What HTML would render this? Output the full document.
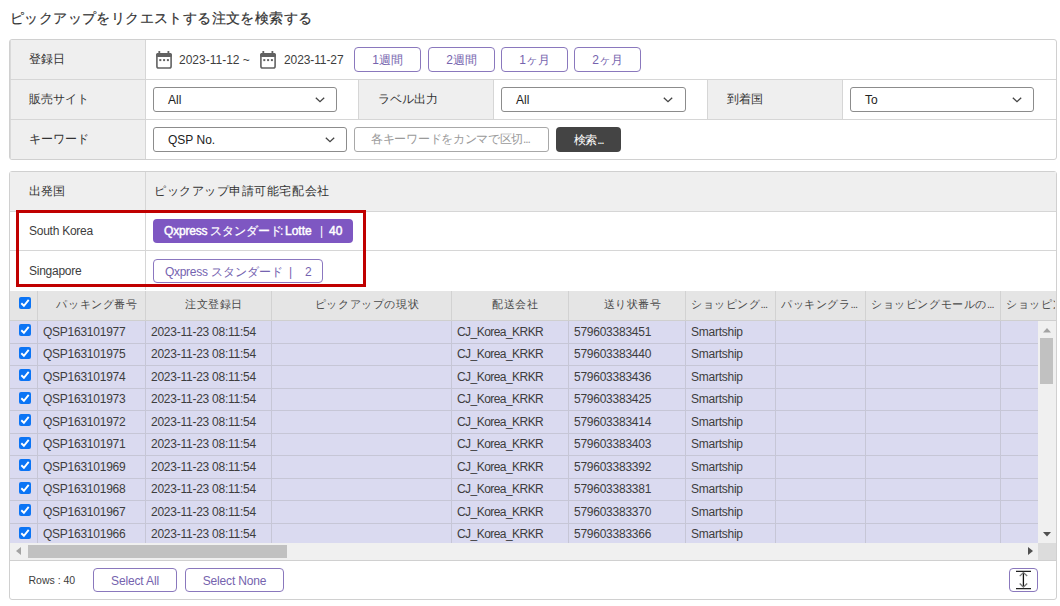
<!DOCTYPE html>
<html lang="ja">
<head>
<meta charset="utf-8">
<style>
*{box-sizing:border-box;margin:0;padding:0}
html,body{width:1060px;height:606px;overflow:hidden;background:#fff}
body{font-family:"Liberation Sans",sans-serif;font-size:12px;color:#333;position:relative}
.a{position:absolute}
.title{left:10px;top:10px;font-size:14px;font-weight:normal;-webkit-text-stroke:0.2px #333;color:#333;letter-spacing:0.4px;white-space:nowrap}
.box1{left:9px;top:39px;width:1048px;height:121px;border:1px solid #d0d0d0;border-radius:3px;overflow:hidden}
.lab{background:#efefef;color:#333;white-space:nowrap}
.hl{height:1px;background:#d6d6d6}
.vl{width:1px;background:#d6d6d6}
.cal{width:16px;height:17px}
.wbtn{height:25px;width:67px;border:1px solid #8a78bd;border-radius:4px;color:#7563ae;text-align:center;line-height:25px;font-size:12px;background:#fff}
.sel{height:25px;border:1px solid #8c8c8c;border-radius:3px;background:#fff;color:#222;line-height:24px;padding-left:14px;font-size:12px}
.chev{position:absolute;top:8.6px;width:10px;height:6px;margin-left:-0.6px}
.box2{left:9px;top:171px;width:1048px;height:429px;border:1px solid #d0d0d0;border-radius:3px;overflow:hidden}
.chip1{left:153px;top:219px;width:200px;height:24px;background:#7e57c2;border-radius:4px;color:#fff;line-height:25px;white-space:nowrap}
.chip2{left:153px;top:259px;width:170px;height:24px;border:1px solid #8b77c0;border-radius:4px;color:#7563b0;line-height:24px;white-space:nowrap}
.red{left:16px;top:210px;width:350px;height:77px;border:3px solid #c00000}
.gh{background:#e5e5e5}
.ght{color:#4a4a4a;font-size:11px;letter-spacing:0.6px;white-space:nowrap;overflow:hidden;text-overflow:ellipsis}
.row{background:#dadaf0}
.cell{letter-spacing:-0.25px}
.cell{white-space:nowrap;color:#3d3d3d}
.cb{width:12px;height:12px;background:#0b74f5;border-radius:2px}
.cb svg{display:block}
.fbtn{height:24px;border:1px solid #8a78bd;border-radius:4px;color:#7563ae;text-align:center;line-height:25px;letter-spacing:-0.15px;font-size:12px;background:#fff}
</style>
</head>
<body>
<div class="a title">ピックアップをリクエストする注文を検索する</div>

<!-- filter box -->
<div class="a box1"></div>
<div class="a lab" style="left:10px;top:40px;width:135px;height:119px"></div>
<div class="a lab" style="left:358px;top:80px;width:135px;height:39px"></div>
<div class="a lab" style="left:707px;top:80px;width:135px;height:39px"></div>
<div class="a vl" style="left:10px;top:40px;height:119px;background:#dadada"></div>
<div class="a hl" style="left:10px;top:79px;width:1046px"></div>
<div class="a hl" style="left:10px;top:119px;width:1046px"></div>
<div class="a vl" style="left:145px;top:40px;height:119px"></div>
<div class="a vl" style="left:358px;top:80px;height:39px"></div>
<div class="a vl" style="left:493px;top:80px;height:39px"></div>
<div class="a vl" style="left:707px;top:80px;height:39px"></div>
<div class="a vl" style="left:842px;top:80px;height:39px"></div>

<div class="a lab" style="left:29px;top:51px;background:none">登録日</div>
<div class="a lab" style="left:29px;top:90.5px;background:none">販売サイト</div>
<div class="a lab" style="left:29px;top:130.5px;background:none">キーワード</div>
<div class="a lab" style="left:378px;top:90.5px;background:none">ラベル出力</div>
<div class="a lab" style="left:727px;top:90.5px;background:none">到着国</div>

<svg class="a" style="left:152px;top:48px" width="24" height="24" viewBox="0 0 24 24"><rect x="4.9" y="5.8" width="14.2" height="14.2" rx="1.8" stroke="#626262" stroke-width="1.6" fill="none"/><rect x="4.1" y="5" width="15.8" height="4" rx="1.5" fill="#626262"/><rect x="6.4" y="3" width="1.8" height="3" fill="#626262"/><rect x="15.5" y="3" width="1.8" height="3" fill="#626262"/><rect x="7.3" y="11.1" width="2" height="2" fill="#626262"/><rect x="11.1" y="11.1" width="2" height="2" fill="#626262"/><rect x="14.9" y="11.1" width="2" height="2" fill="#626262"/></svg>
<div class="a cell" style="left:179px;top:53px;letter-spacing:0">2023-11-12 ~</div>
<svg class="a" style="left:256px;top:48px" width="24" height="24" viewBox="0 0 24 24"><rect x="4.9" y="5.8" width="14.2" height="14.2" rx="1.8" stroke="#626262" stroke-width="1.6" fill="none"/><rect x="4.1" y="5" width="15.8" height="4" rx="1.5" fill="#626262"/><rect x="6.4" y="3" width="1.8" height="3" fill="#626262"/><rect x="15.5" y="3" width="1.8" height="3" fill="#626262"/><rect x="7.3" y="11.1" width="2" height="2" fill="#626262"/><rect x="11.1" y="11.1" width="2" height="2" fill="#626262"/><rect x="14.9" y="11.1" width="2" height="2" fill="#626262"/></svg>
<div class="a cell" style="left:284px;top:53px;letter-spacing:-0.1px">2023-11-27</div>
<div class="a wbtn" style="left:354px;top:47px">1週間</div>
<div class="a wbtn" style="left:428px;top:47px">2週間</div>
<div class="a wbtn" style="left:501px;top:47px">1ヶ月</div>
<div class="a wbtn" style="left:574px;top:47px">2ヶ月</div>

<div class="a sel" style="left:153px;top:87px;width:184px">All<svg class="chev" style="left:162px" viewBox="0 0 10 6"><path d="M0.8 0.8L5 4.7L9.2 0.8" stroke="#444" stroke-width="1.3" fill="none"/></svg></div>
<div class="a sel" style="left:501px;top:87px;width:185px">All<svg class="chev" style="left:162px" viewBox="0 0 10 6"><path d="M0.8 0.8L5 4.7L9.2 0.8" stroke="#444" stroke-width="1.3" fill="none"/></svg></div>
<div class="a sel" style="left:850px;top:87px;width:184px">To<svg class="chev" style="left:162px" viewBox="0 0 10 6"><path d="M0.8 0.8L5 4.7L9.2 0.8" stroke="#444" stroke-width="1.3" fill="none"/></svg></div>
<div class="a sel" style="left:153px;top:127px;width:194px">QSP No.<svg class="chev" style="left:172px" viewBox="0 0 10 6"><path d="M0.8 0.8L5 4.7L9.2 0.8" stroke="#444" stroke-width="1.3" fill="none"/></svg></div>
<div class="a sel" style="left:354px;top:127px;width:195px;border-color:#a8a8a8;color:#9a9a9a;padding-left:16px;line-height:22.5px;letter-spacing:-0.3px">各キーワードをカンマで区切<span style="letter-spacing:-1.2px">...</span></div>
<div class="a" style="left:556px;top:127px;width:65px;height:25px;background:#444;border-radius:4px;color:#fff;text-align:center;line-height:26px;letter-spacing:-0.3px">検索<span style="letter-spacing:-1.3px">...</span></div>

<!-- box 2 -->
<div class="a box2"></div>
<div class="a lab" style="left:10px;top:172px;width:1046px;height:39px"></div>
<div class="a hl" style="left:10px;top:211px;width:1046px"></div>
<div class="a hl" style="left:10px;top:250px;width:1046px"></div>
<div class="a vl" style="left:145px;top:172px;height:118px"></div>
<div class="a lab" style="left:29px;top:183px;background:none">出発国</div>
<div class="a lab" style="left:154px;top:183px;background:none;letter-spacing:0.55px">ピックアップ申請可能宅配会社</div>
<div class="a cell" style="left:29px;top:224px">South Korea</div>
<div class="a cell" style="left:29px;top:264px">Singapore</div>
<div class="a chip1"><span style="position:absolute;left:11px;-webkit-text-stroke:0.45px #fff;letter-spacing:-0.2px">Qxpress</span><span style="position:absolute;left:57px;-webkit-text-stroke:0.2px #fff;font-size:11.5px">スタンダード</span><span style="position:absolute;left:127px;-webkit-text-stroke:0.2px #fff">:</span><span style="position:absolute;left:132px;-webkit-text-stroke:0.45px #fff">Lotte</span><span style="position:absolute;left:167px">|</span><span style="position:absolute;left:176px;-webkit-text-stroke:0.45px #fff">40</span></div>
<div class="a chip2"><span style="position:absolute;left:11px;letter-spacing:-0.3px">Qxpress</span><span style="position:absolute;left:57px">スタンダード</span><span style="position:absolute;left:135px">|</span><span style="position:absolute;left:151px">2</span></div>
<div class="a red"></div>

<!-- grid -->
<div id="grid"><div class="a gh" style="left:10px;top:291px;width:1046px;height:29px"></div>
<div class="a hl" style="left:10px;top:320px;width:1046px;background:#cfcfcf"></div>
<div class="a row" style="left:10px;top:321px;width:1028px;height:222px"></div>
<div class="a hl" style="left:10px;top:342.5px;width:1028px;background:#c6c6d6"></div>
<div class="a hl" style="left:10px;top:365.0px;width:1028px;background:#c6c6d6"></div>
<div class="a hl" style="left:10px;top:387.5px;width:1028px;background:#c6c6d6"></div>
<div class="a hl" style="left:10px;top:410.0px;width:1028px;background:#c6c6d6"></div>
<div class="a hl" style="left:10px;top:432.5px;width:1028px;background:#c6c6d6"></div>
<div class="a hl" style="left:10px;top:455.0px;width:1028px;background:#c6c6d6"></div>
<div class="a hl" style="left:10px;top:477.5px;width:1028px;background:#c6c6d6"></div>
<div class="a hl" style="left:10px;top:500.0px;width:1028px;background:#c6c6d6"></div>
<div class="a hl" style="left:10px;top:522.5px;width:1028px;background:#c6c6d6"></div>
<div class="a vl" style="left:37px;top:291px;height:29px;background:#d2d2d2"></div>
<div class="a vl" style="left:37px;top:321px;height:222px;background:#c6c6d6"></div>
<div class="a vl" style="left:145px;top:291px;height:29px;background:#d2d2d2"></div>
<div class="a vl" style="left:145px;top:321px;height:222px;background:#c6c6d6"></div>
<div class="a vl" style="left:271px;top:291px;height:29px;background:#d2d2d2"></div>
<div class="a vl" style="left:271px;top:321px;height:222px;background:#c6c6d6"></div>
<div class="a vl" style="left:451px;top:291px;height:29px;background:#d2d2d2"></div>
<div class="a vl" style="left:451px;top:321px;height:222px;background:#c6c6d6"></div>
<div class="a vl" style="left:568px;top:291px;height:29px;background:#d2d2d2"></div>
<div class="a vl" style="left:568px;top:321px;height:222px;background:#c6c6d6"></div>
<div class="a vl" style="left:685px;top:291px;height:29px;background:#d2d2d2"></div>
<div class="a vl" style="left:685px;top:321px;height:222px;background:#c6c6d6"></div>
<div class="a vl" style="left:775px;top:291px;height:29px;background:#d2d2d2"></div>
<div class="a vl" style="left:775px;top:321px;height:222px;background:#c6c6d6"></div>
<div class="a vl" style="left:865px;top:291px;height:29px;background:#d2d2d2"></div>
<div class="a vl" style="left:865px;top:321px;height:222px;background:#c6c6d6"></div>
<div class="a vl" style="left:1000px;top:291px;height:29px;background:#d2d2d2"></div>
<div class="a vl" style="left:1000px;top:321px;height:222px;background:#c6c6d6"></div>
<div class="a cb" style="left:19px;top:297px"><svg width="12" height="12" viewBox="0 0 12 12"><path d="M2.3 6.3L4.9 8.8L9.7 2.9" stroke="#fff" stroke-width="1.9" fill="none"/></svg></div>
<div class="a ght" style="left:49px;top:296.5px;width:96px;text-align:center">パッキング番号</div>
<div class="a ght" style="left:157px;top:296.5px;width:114px;text-align:center">注文登録日</div>
<div class="a ght" style="left:283px;top:296.5px;width:168px;text-align:center">ピックアップの現状</div>
<div class="a ght" style="left:463px;top:296.5px;width:105px;text-align:center">配送会社</div>
<div class="a ght" style="left:580px;top:296.5px;width:105px;text-align:center">送り状番号</div>
<div class="a ght" style="left:691px;top:296.5px;width:94px;text-overflow:clip">ショッピング<span style='letter-spacing:-0.8px'>...</span></div>
<div class="a ght" style="left:781px;top:296.5px;width:94px;text-overflow:clip">パッキングラ<span style='letter-spacing:-0.8px'>...</span></div>
<div class="a ght" style="left:871px;top:296.5px;width:139px;text-overflow:clip">ショッピングモールの<span style='letter-spacing:-0.8px'>...</span></div>
<div class="a ght" style="left:1006px;top:296.5px;width:49px;text-overflow:clip">ショッピング</div>
<div class="a cb" style="left:19px;top:324px"><svg width="12" height="12" viewBox="0 0 12 12"><path d="M2.3 6.3L4.9 8.8L9.7 2.9" stroke="#fff" stroke-width="1.9" fill="none"/></svg></div>
<div class="a cell" style="left:43px;top:324.5px">QSP163101977</div>
<div class="a cell" style="left:151px;top:324.5px">2023-11-23 08:11:54</div>
<div class="a cell" style="left:457px;top:324.5px;letter-spacing:-0.55px">CJ_Korea_KRKR</div>
<div class="a cell" style="left:574px;top:324.5px">579603383451</div>
<div class="a cell" style="left:691px;top:324.5px">Smartship</div>
<div class="a cb" style="left:19px;top:347px"><svg width="12" height="12" viewBox="0 0 12 12"><path d="M2.3 6.3L4.9 8.8L9.7 2.9" stroke="#fff" stroke-width="1.9" fill="none"/></svg></div>
<div class="a cell" style="left:43px;top:347.0px">QSP163101975</div>
<div class="a cell" style="left:151px;top:347.0px">2023-11-23 08:11:54</div>
<div class="a cell" style="left:457px;top:347.0px;letter-spacing:-0.55px">CJ_Korea_KRKR</div>
<div class="a cell" style="left:574px;top:347.0px">579603383440</div>
<div class="a cell" style="left:691px;top:347.0px">Smartship</div>
<div class="a cb" style="left:19px;top:369px"><svg width="12" height="12" viewBox="0 0 12 12"><path d="M2.3 6.3L4.9 8.8L9.7 2.9" stroke="#fff" stroke-width="1.9" fill="none"/></svg></div>
<div class="a cell" style="left:43px;top:369.5px">QSP163101974</div>
<div class="a cell" style="left:151px;top:369.5px">2023-11-23 08:11:54</div>
<div class="a cell" style="left:457px;top:369.5px;letter-spacing:-0.55px">CJ_Korea_KRKR</div>
<div class="a cell" style="left:574px;top:369.5px">579603383436</div>
<div class="a cell" style="left:691px;top:369.5px">Smartship</div>
<div class="a cb" style="left:19px;top:392px"><svg width="12" height="12" viewBox="0 0 12 12"><path d="M2.3 6.3L4.9 8.8L9.7 2.9" stroke="#fff" stroke-width="1.9" fill="none"/></svg></div>
<div class="a cell" style="left:43px;top:392.0px">QSP163101973</div>
<div class="a cell" style="left:151px;top:392.0px">2023-11-23 08:11:54</div>
<div class="a cell" style="left:457px;top:392.0px;letter-spacing:-0.55px">CJ_Korea_KRKR</div>
<div class="a cell" style="left:574px;top:392.0px">579603383425</div>
<div class="a cell" style="left:691px;top:392.0px">Smartship</div>
<div class="a cb" style="left:19px;top:414px"><svg width="12" height="12" viewBox="0 0 12 12"><path d="M2.3 6.3L4.9 8.8L9.7 2.9" stroke="#fff" stroke-width="1.9" fill="none"/></svg></div>
<div class="a cell" style="left:43px;top:414.5px">QSP163101972</div>
<div class="a cell" style="left:151px;top:414.5px">2023-11-23 08:11:54</div>
<div class="a cell" style="left:457px;top:414.5px;letter-spacing:-0.55px">CJ_Korea_KRKR</div>
<div class="a cell" style="left:574px;top:414.5px">579603383414</div>
<div class="a cell" style="left:691px;top:414.5px">Smartship</div>
<div class="a cb" style="left:19px;top:437px"><svg width="12" height="12" viewBox="0 0 12 12"><path d="M2.3 6.3L4.9 8.8L9.7 2.9" stroke="#fff" stroke-width="1.9" fill="none"/></svg></div>
<div class="a cell" style="left:43px;top:437.0px">QSP163101971</div>
<div class="a cell" style="left:151px;top:437.0px">2023-11-23 08:11:54</div>
<div class="a cell" style="left:457px;top:437.0px;letter-spacing:-0.55px">CJ_Korea_KRKR</div>
<div class="a cell" style="left:574px;top:437.0px">579603383403</div>
<div class="a cell" style="left:691px;top:437.0px">Smartship</div>
<div class="a cb" style="left:19px;top:459px"><svg width="12" height="12" viewBox="0 0 12 12"><path d="M2.3 6.3L4.9 8.8L9.7 2.9" stroke="#fff" stroke-width="1.9" fill="none"/></svg></div>
<div class="a cell" style="left:43px;top:459.5px">QSP163101969</div>
<div class="a cell" style="left:151px;top:459.5px">2023-11-23 08:11:54</div>
<div class="a cell" style="left:457px;top:459.5px;letter-spacing:-0.55px">CJ_Korea_KRKR</div>
<div class="a cell" style="left:574px;top:459.5px">579603383392</div>
<div class="a cell" style="left:691px;top:459.5px">Smartship</div>
<div class="a cb" style="left:19px;top:482px"><svg width="12" height="12" viewBox="0 0 12 12"><path d="M2.3 6.3L4.9 8.8L9.7 2.9" stroke="#fff" stroke-width="1.9" fill="none"/></svg></div>
<div class="a cell" style="left:43px;top:482.0px">QSP163101968</div>
<div class="a cell" style="left:151px;top:482.0px">2023-11-23 08:11:54</div>
<div class="a cell" style="left:457px;top:482.0px;letter-spacing:-0.55px">CJ_Korea_KRKR</div>
<div class="a cell" style="left:574px;top:482.0px">579603383381</div>
<div class="a cell" style="left:691px;top:482.0px">Smartship</div>
<div class="a cb" style="left:19px;top:504px"><svg width="12" height="12" viewBox="0 0 12 12"><path d="M2.3 6.3L4.9 8.8L9.7 2.9" stroke="#fff" stroke-width="1.9" fill="none"/></svg></div>
<div class="a cell" style="left:43px;top:504.5px">QSP163101967</div>
<div class="a cell" style="left:151px;top:504.5px">2023-11-23 08:11:54</div>
<div class="a cell" style="left:457px;top:504.5px;letter-spacing:-0.55px">CJ_Korea_KRKR</div>
<div class="a cell" style="left:574px;top:504.5px">579603383370</div>
<div class="a cell" style="left:691px;top:504.5px">Smartship</div>
<div class="a cb" style="left:19px;top:527px"><svg width="12" height="12" viewBox="0 0 12 12"><path d="M2.3 6.3L4.9 8.8L9.7 2.9" stroke="#fff" stroke-width="1.9" fill="none"/></svg></div>
<div class="a cell" style="left:43px;top:527.0px">QSP163101966</div>
<div class="a cell" style="left:151px;top:527.0px">2023-11-23 08:11:54</div>
<div class="a cell" style="left:457px;top:527.0px;letter-spacing:-0.55px">CJ_Korea_KRKR</div>
<div class="a cell" style="left:574px;top:527.0px">579603383366</div>
<div class="a cell" style="left:691px;top:527.0px">Smartship</div>
<div class="a" style="left:10px;top:543px;width:1028px;height:17px;background:#f0f0f0"></div>
<div class="a" style="left:28px;top:545px;width:259px;height:13px;background:#c1c1c1"></div>
<svg class="a" style="left:16px;top:547px" width="6" height="8"><path d="M5 0V8L0 4Z" fill="#a3a3a3"/></svg>
<svg class="a" style="left:1027.5px;top:547px" width="6" height="8"><path d="M0 0V8L5 4Z" fill="#505050"/></svg>
<div class="a" style="left:1038px;top:321px;width:18px;height:222px;background:#f0f0f0"></div>
<div class="a" style="left:1040px;top:338px;width:13px;height:46px;background:#c1c1c1"></div>
<svg class="a" style="left:1043px;top:327.5px" width="8" height="5"><path d="M0 4.5H8L4 0Z" fill="#a3a3a3"/></svg>
<svg class="a" style="left:1043px;top:531.5px" width="8" height="5"><path d="M0 0H8L4 4.5Z" fill="#505050"/></svg>
<div class="a" style="left:1038px;top:543px;width:18px;height:17px;background:#dcdcdc"></div></div><!--/grid-->

<!-- footer -->
<div class="a hl" style="left:10px;top:560px;width:1046px;background:#d0d0d0"></div>
<div class="a cell" style="left:28.5px;top:573.5px;font-size:10.5px;letter-spacing:0">Rows : 40</div>
<div class="a fbtn" style="left:93px;top:568px;width:84px">Select All</div>
<div class="a fbtn" style="left:185px;top:568px;width:99px">Select None</div>
<div class="a fbtn" style="left:1009px;top:568px;width:29px"></div>
<svg class="a" style="left:1009px;top:568px" width="29" height="24" viewBox="0 0 29 24"><path d="M7 3.4H22M7 20.6H22" stroke="#222" stroke-width="1.3" fill="none"/><path d="M14.4 4.8V18.8" stroke="#111" stroke-width="1.3" fill="none"/><path d="M10.7 8.1L14.4 4.6L18.2 8.1M10.7 15.5L14.4 19L18.2 15.5" stroke="#777" stroke-width="1.3" fill="none"/></svg>
</body>
</html>
